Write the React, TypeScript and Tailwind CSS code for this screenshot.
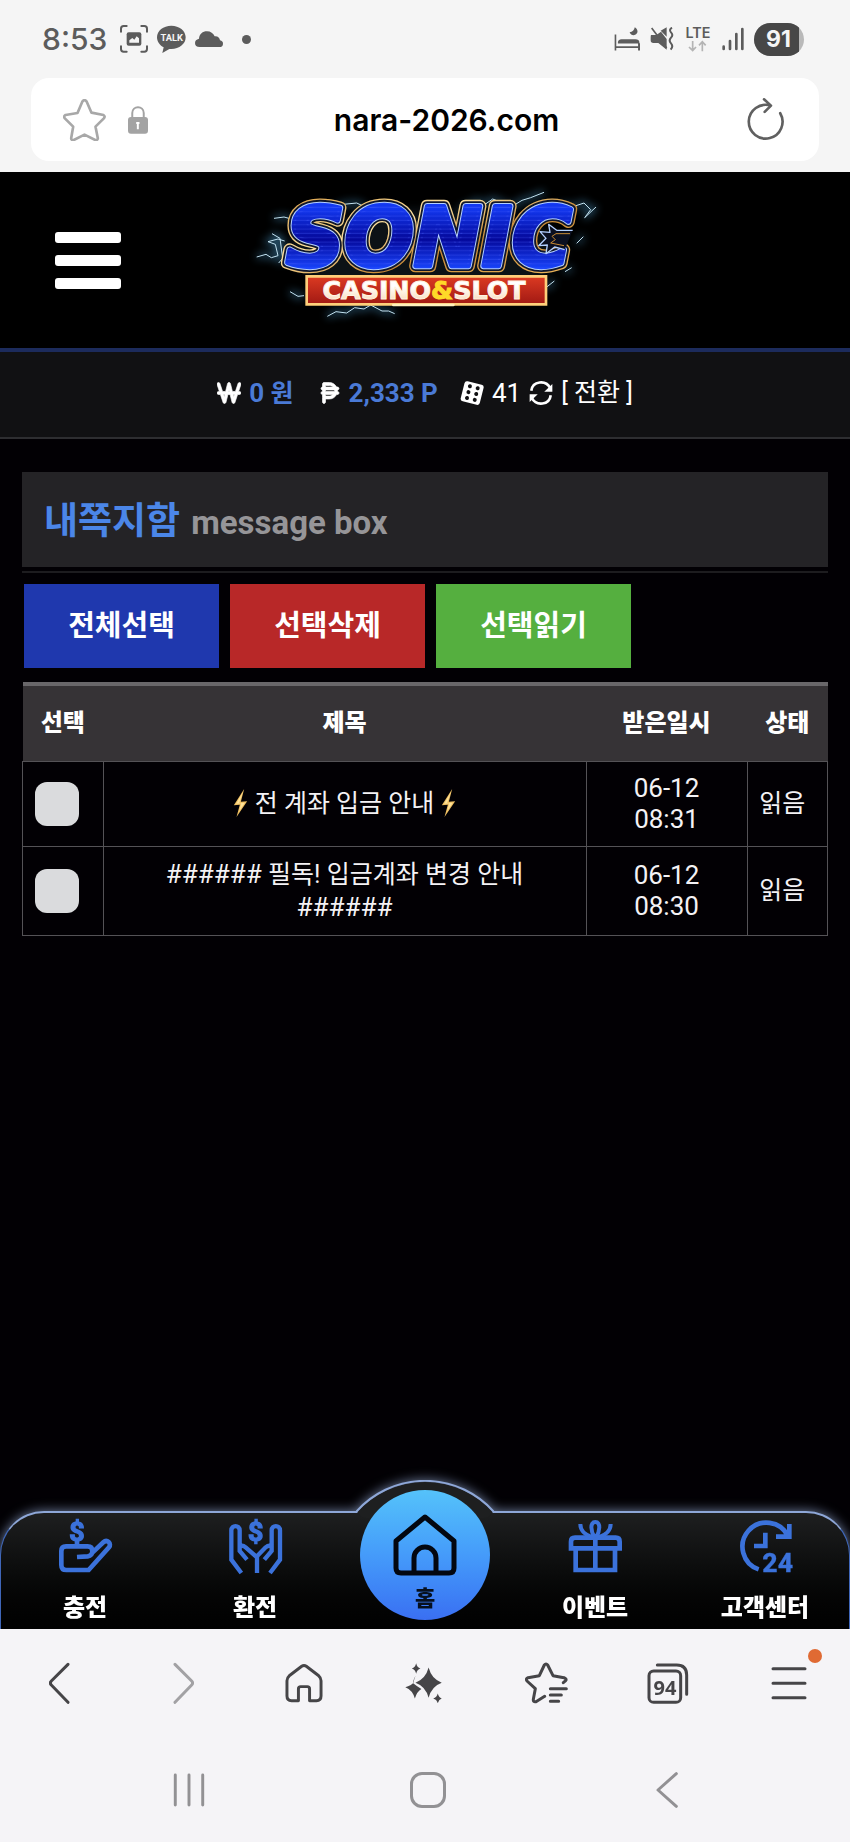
import type { ReactNode } from "react";
import { FaPesoSign, FaWonSign } from "react-icons/fa6";

/* ---------- phone status bar ---------- */

function StatusBar() {
  return (
    <div className="flex h-[78px] items-center justify-between pr-[46px] pl-[42px] text-[#5c5c5c]">
      <div className="flex items-center gap-[9px]">
        <span className="mr-1 font-[Inter,sans-serif] text-[30px] leading-8 font-medium">8:53</span>
        <svg className="h-7 w-7" viewBox="360 77 84 84" fill="none" stroke="currentColor" strokeWidth="6" strokeLinecap="round" aria-hidden="true">
          <path d="M363 97V88q0-8 8-8h9M424 80h9q8 0 8 8v9M441 141v8q0 8-8 8h-9M380 157h-9q-8 0-8-8v-8" />
          <rect x="380" y="99" width="44" height="40" rx="6" fill="currentColor" stroke="none" />
          <path d="M388 130v-7l9-7 6 5 7-10 7 6v13z" fill="#f5f5f5" stroke="none" />
        </svg>
        <svg className="h-7 w-[29px]" viewBox="470 76 87 84" fill="currentColor" aria-hidden="true">
          <path d="M513 78c24 0 43 15 43 35s-19 35-43 35h-6l-21 12 4-17c-12-6-20-17-20-30 0-20 19-35 43-35z" />
          <text x="514" y="125" textAnchor="middle" fill="#f5f5f5" fontFamily="Roboto, sans-serif" fontWeight="700" fontSize="28">TALK</text>
        </svg>
        <svg className="h-4 w-7" viewBox="582 92 84 48" fill="currentColor" aria-hidden="true">
          <path d="M596 140q-14 0-14-12 0-10 12-13c1-14 11-22 24-22 11 0 19 6 23 15 10-1 15 5 16 12q9 2 9 10 0 10-11 10z" />
        </svg>
        <span className="ml-2.5 h-[9px] w-[9px] rounded-full bg-[#5c5c5c]" />
      </div>
      <div className="flex items-center gap-[10px]">
        <svg className="h-[26px] w-[26px]" viewBox="562 80 80 76" fill="currentColor" aria-hidden="true">
          <path d="M564 104h5v36h67v-9h6v22h-6v-7h-67v7h-5zM574 132v-5q2-8 11-8h43q11 0 12 8v5zM626 82c-2 9-7 14-16 15 3 8 11 11 17 8 8-3 12-14-1-23z" />
        </svg>
        <svg className="h-6 w-6" viewBox="676 83 72 72" fill="currentColor" aria-hidden="true">
          <path d="M679 107h16l14-10 17 22v32l-25-20h-15q-8 0-8-8v-8q0-6 1-8zM708 94l18-10v28z" />
          <path d="M681 86l45 60" fill="none" stroke="currentColor" strokeWidth="5" />
          <path d="M742 85q-10 6-3 14 8 8 0 16-8 9 0 17 8 9-1 19" fill="none" stroke="currentColor" strokeWidth="6" />
        </svg>
        <svg className="h-[34px] w-7 overflow-visible" viewBox="785 67 84 102" fill="none" aria-hidden="true">
          <text x="827" y="114" textAnchor="middle" fill="currentColor" fontFamily="Inter, sans-serif" fontWeight="600" fontSize="43">LTE</text>
          <path d="M811 124v28m-11-10 11 11 10-11M840 155v-29m-10 11 10-11 10 11" stroke="#b4b4b4" strokeWidth="5" />
        </svg>
        <svg className="h-6 w-[22px]" viewBox="893 83 66 70" stroke="currentColor" strokeWidth="8" strokeLinecap="round" aria-hidden="true">
          <path d="M898 141v7M917 124v24M936 103v45M954 88v60" />
        </svg>
        <span className="flex h-[33px] w-[50px] items-center overflow-hidden rounded-full bg-[#b9b9b9]">
          <span className="flex h-full w-[45px] items-center justify-center bg-[#474747] pl-1 font-[Inter,sans-serif] text-[23px] font-bold text-[#f5f5f5]">91</span>
        </span>
      </div>
    </div>
  );
}

function AddressBar() {
  return (
    <div className="mx-[31px] mb-[11px] flex h-[83px] items-center rounded-[18px] bg-white px-8">
      <div className="flex items-center gap-[22px]">
        <button type="button" aria-label="Bookmark">
          <svg className="block h-[42px] w-[43px]" viewBox="189 295 128 126" fill="none" stroke="#a8a8a8" strokeWidth="8" strokeLinejoin="round" aria-hidden="true">
            <path d="M247 302q6-7 12 0l15 34 36 7q6 4 1 10l-25 25 7 35q-1 7-8 5l-32-16-32 16q-8 2-8-5l6-35-25-25q-5-6 2-10l36-6z" />
          </svg>
        </button>
        <svg className="h-7 w-5" viewBox="383 317 61 84" fill="none" aria-hidden="true">
          <path d="M396 356v-18c0-24 35-24 35 0v18" stroke="#a3a3a3" strokeWidth="6" />
          <rect x="383" y="350" width="61" height="51" rx="9" fill="#a3a3a3" />
          <path d="M413 368v19M408 368h10" stroke="#fff" strokeWidth="6" />
        </svg>
      </div>
      <span className="flex-1 text-center font-[Inter,sans-serif] text-[30px] leading-9 font-semibold text-black">nara-2026.com</span>
      <button type="button" aria-label="Reload">
        <svg className="block h-[43px] w-[42px]" viewBox="962 288 120 130" fill="none" stroke="#606060" strokeWidth="8" strokeLinecap="round" strokeLinejoin="round" aria-hidden="true">
          <path d="M1065 334A51 51 0 1 1 1036 311M1016 292l21 19-19 19" />
        </svg>
      </button>
    </div>
  );
}

/* ---------- site header ---------- */

function Logo() {
  return (
    <svg className="h-[160px] w-[370px] max-w-full" viewBox="0 15 1110 480" role="img" aria-label="SONIC CASINO&SLOT">
      <defs>
        <linearGradient id="gold" x1="0" x2="1" y1="0" y2="1">
          <stop offset="0" stopColor="#d79a3e" />
          <stop offset=".35" stopColor="#ffe3a0" />
          <stop offset=".6" stopColor="#c98a34" />
          <stop offset="1" stopColor="#f3bf64" />
        </linearGradient>
        <linearGradient id="blue" x1="0" x2="0" y1="100" y2="285" gradientUnits="userSpaceOnUse">
          <stop offset="0" stopColor="#1238f0" />
          <stop offset=".5" stopColor="#04089a" />
          <stop offset="1" stopColor="#1846ff" />
        </linearGradient>
        <linearGradient id="red" x1="0" x2="0" y1="0" y2="1">
          <stop offset="0" stopColor="#dc3a22" />
          <stop offset="1" stopColor="#a11913" />
        </linearGradient>
        <linearGradient id="cream" x1="0" x2="0" y1="0" y2="1">
          <stop offset=".4" stopColor="#fff" />
          <stop offset="1" stopColor="#f8d3a8" />
        </linearGradient>
        <pattern id="lines" width="12" height="13" patternUnits="userSpaceOnUse">
          <path d="M0 6h12" stroke="#4a62ff" strokeOpacity=".5" strokeWidth="2" />
        </pattern>
        <filter id="soft" x="-30%" y="-50%" width="160%" height="200%">
          <feGaussianBlur stdDeviation="12" />
        </filter>
        <g id="bolts" fill="none">
          <path d="M50 246l28-8 16 10 20-6-8-34-22-8 30-8 20 6M102 130l30-4 22 6M96 176l24 14 8 60-12 14M150 350l24 14 18-2M262 424l26-14 32 4 24-16 28 4 20-12 34 18 20 0 18 8M284 100l26-12 40-4 26 12M660 104l50-26 28 8 20-14 30 12 22 14 36-22 26-8 40-16M958 92l44 2 30-10 20 20-18 24 34-32M1010 205l20-20M975 290l20-12M915 340l28-22" />
        </g>
      </defs>
      <ellipse cx="560" cy="230" rx="420" ry="130" fill="#2c3c48" opacity=".3" filter="url(#soft)" />
      <use href="#bolts" stroke="#4d9fd0" strokeWidth="12" opacity=".6" filter="url(#soft)" />
      <use href="#bolts" stroke="#c3e3f2" strokeWidth="3" strokeLinejoin="round" />
      <g strokeLinejoin="round">
        <g fill="none" stroke="url(#gold)" strokeWidth="38">
          <text id="word" x="138" y="274" fontFamily="'DejaVu Sans', sans-serif" fontWeight="700" fontStyle="italic" fontSize="244">
            SONIC
          </text>
        </g>
        <use href="#word" fill="none" stroke="#10172c" strokeWidth="30" />
        <use href="#word" fill="none" stroke="#b4d0ff" strokeWidth="19" />
        <use href="#word" fill="url(#blue)" stroke="url(#blue)" strokeWidth="13" />
        <use href="#word" fill="url(#lines)" stroke="url(#lines)" strokeWidth="11" />
        <path d="M998 166 950 166 926 148 930 172 900 170 918 190 896 212 922 210 918 236 944 216 974 224" fill="#0b0f20" stroke="#b4d0ff" strokeWidth="4" />
        <path d="M990 176 948 176 936 184 946 194 932 204 972 212" fill="none" stroke="#c98a34" strokeWidth="3" />
      </g>
      <path d="M200 304H918V388H200Z" fill="url(#red)" stroke="#ffcf7a" strokeWidth="8" />
      <path d="M460 390H640" stroke="#fff0bd" strokeWidth="8" strokeLinecap="round" />
      <text x="552" y="371" textAnchor="middle" fontFamily="'DejaVu Sans', sans-serif" fontWeight="700" fontSize="76" fill="url(#cream)" stroke="#fff4e2" strokeWidth="3">
        CASINO<tspan fill="#ffd928" stroke="#ffd928">&amp;</tspan>SLOT
      </text>
    </svg>
  );
}

function SiteHeader() {
  return (
    <header className="grid h-[180px] grid-cols-[1fr_auto_1fr] items-center border-b-4 border-[#1c2b5c] bg-black px-[55px]">
      <button type="button" aria-label="메뉴" className="flex w-[66px] flex-col gap-3">
        <span className="h-[11px] rounded-[3px] bg-white" />
        <span className="h-[11px] rounded-[3px] bg-white" />
        <span className="h-[11px] rounded-[3px] bg-white" />
      </button>
      <Logo />
    </header>
  );
}

function DiceIcon() {
  return (
    <svg className="h-6 w-6" viewBox="778 120 72 72" aria-hidden="true">
      <g transform="rotate(14 814 156)">
        <rect x="785" y="125" width="59" height="62" rx="8" fill="#fff" />
        <g fill="#111113">
          <circle cx="803" cy="138" r="6" />
          <circle cx="827" cy="138" r="6" />
          <circle cx="803" cy="156" r="6" />
          <circle cx="827" cy="156" r="6" />
          <circle cx="803" cy="174" r="6" />
          <circle cx="827" cy="174" r="6" />
        </g>
      </g>
    </svg>
  );
}

function SyncIcon() {
  return (
    <svg className="h-6 w-6" viewBox="986 124 74 72" fill="none" stroke="#fff" strokeWidth="8" aria-hidden="true">
      <path d="M993 153c4-31 45-34 58-9M1053 167c-4 31-45 34-58 9" />
      <path d="M1058 132v24h-25zM988 188v-24h25z" fill="#fff" stroke="none" />
    </svg>
  );
}

function BalanceBar() {
  return (
    <div className="flex h-[87px] items-center justify-center border-b-2 border-[#2e2e31] bg-[#111113] pb-[3px] text-[26px] leading-[30px] text-white">
      <FaWonSign className="h-6 w-6" stroke="currentColor" strokeWidth="14" aria-hidden="true" />
      <span className="ml-2 font-bold text-[#4a7ad6]">
        0 <span className="text-[25px]">원</span>
      </span>
      <FaPesoSign className="ml-6 h-6 w-6" stroke="currentColor" strokeWidth="14" aria-hidden="true" />
      <span className="ml-[7px] font-bold text-[#4a7ad6]">2,333 P</span>
      <span className="ml-[22px] flex items-center gap-2">
        <DiceIcon />
        41
      </span>
      <button type="button" className="ml-2 flex items-center gap-2">
        <SyncIcon />
        <span className="text-[25px]">[ 전환 ]</span>
      </button>
    </div>
  );
}

/* ---------- message box ---------- */

const messages = [
  { id: 1, label: "전 계좌 입금 안내 선택", subject: <><Bolt /> 전 계좌 입금 안내 <Bolt /></>, day: "06-12", time: "08:31" },
  { id: 2, label: "필독! 입금계좌 변경 안내 선택", subject: <><Hashes /> 필독! 입금계좌 변경 안내 <Hashes /></>, day: "06-12", time: "08:30" },
];

function Hashes() {
  return <span className="text-[26px]">######</span>;
}

function Bolt() {
  return (
    <svg className="inline-block h-7 w-[15px] align-[-5px]" viewBox="698 390 40 84" aria-hidden="true">
      <path d="M729 390l-31 49 18-2-10 37 32-47-19 1z" fill="#f0bf62" />
      <path d="M725 400l-20 34 15-1-6 24 17-26-17 1z" fill="#ffe39a" />
    </svg>
  );
}

function MessageBox() {
  const cell = "border border-[#545256] py-[11px]";
  return (
    <main className="flex-1 bg-[#020004] px-[22px] pt-[33px] pb-10">
      <h1 className="flex h-[95px] items-center gap-[11px] bg-[#242326] px-[22px] pt-1 text-[37px] font-bold text-[#4b86e8]">
        내쪽지함 <small className="pt-0.5 text-[33px] text-[#969598]">message box</small>
      </h1>
      <div className="mt-1 border-t-2 border-[#1d1c1f]" />
      <div className="mt-[11px] flex gap-[11px] px-0.5 text-[29px] font-bold text-white">
        <button type="button" className="h-[84px] w-[195px] bg-[#1f38ae] pt-0.5">전체선택</button>
        <button type="button" className="h-[84px] w-[195px] bg-[#b82828] pt-0.5">선택삭제</button>
        <button type="button" className="h-[84px] w-[195px] bg-[#55af3f] pt-0.5">선택읽기</button>
      </div>
      <table className="mt-[14px] w-full table-fixed border-collapse text-center text-[25px] text-[#f4f2f5]">
        <colgroup>
          <col className="w-[10%]" />
          <col className="w-[60%]" />
          <col className="w-[20%]" />
          <col className="w-[10%]" />
        </colgroup>
        <thead>
          <tr className="h-[77px] border-t-4 border-[#69676a] bg-[#363336] text-[24px] text-white">
            <th scope="col" className="font-black">선택</th>
            <th scope="col" className="font-black">제목</th>
            <th scope="col" className="font-black">받은일시</th>
            <th scope="col" className="font-black">상태</th>
          </tr>
        </thead>
        <tbody>
          {messages.map((m) => (
            <tr key={m.id}>
              <td className={cell}>
                <input type="checkbox" aria-label={m.label} className="ml-3 block h-11 w-11 appearance-none rounded-[12px] bg-[#dadbdd] checked:bg-[#4b86e8]" />
              </td>
              <td className={`${cell} px-5 leading-8`}>
                <a href="#message">{m.subject}</a>
              </td>
              <td className={`${cell} text-[26px] leading-[31px]`}>
                {m.day}
                <br />
                {m.time}
              </td>
              <td className={`${cell} pr-2.5`}>읽음</td>
            </tr>
          ))}
        </tbody>
      </table>
    </main>
  );
}

/* ---------- site tab bar ---------- */

function TabIcon({ viewBox, children }: { viewBox: string; children: ReactNode }) {
  return (
    <svg className="h-[54px] w-[55px] overflow-visible" viewBox={viewBox} fill="none" stroke="#3b72db" strokeWidth="14" aria-hidden="true">
      {children}
    </svg>
  );
}

function Dollar({ x }: { x: number }) {
  return (
    <text x={x} y="240" textAnchor="middle" fill="#3b72db" stroke="#3b72db" strokeWidth="4" fontFamily="Roboto, sans-serif" fontWeight="700" fontSize="80">
      $
    </text>
  );
}

function Tab({ label, children }: { label: string; children: ReactNode }) {
  return (
    <a href="#tab" className="flex flex-col items-center gap-5 pt-2 text-[24px] leading-[30px] font-black text-white">
      {children}
      {label}
    </a>
  );
}

function TabBar() {
  return (
    <nav className="relative h-[118px] bg-[#020004]">
      <div className="absolute inset-0 drop-shadow-[0_0_6px_#6f7f9f]" aria-hidden="true">
        <div className="h-full rounded-t-[44px] border-x border-t-2 border-x-[#3f66b8] border-t-[#8ea7d8] bg-linear-to-b from-[#1e1f20] via-[#0b0c0c] to-[#010101]" />
        <svg className="absolute -top-[31px] left-1/2 h-[38px] w-[138px] -translate-x-1/2" viewBox="0 0 138 38">
          <path d="M1 32Q5 38 10 38H128Q133 38 137 32A92 92 0 0 0 1 32Z" fill="#1e1f20" />
          <path d="M0 32A92 92 0 0 1 138 32" fill="none" stroke="#8ea7d8" strokeWidth="2" />
        </svg>
      </div>
      <div className="relative grid h-full grid-cols-5">
        <Tab label="충전">
          <TabIcon viewBox="172 175 165 162">
            <Dollar x={229} />
            <path d="M229 240v16" />
            <path d="M229 289l32-2q14-2 14-16c0-9-5-14-14-14h-65q-14 0-14 14v42q0 15 15 15h67l61-68c9-12-6-25-17-15l-32 30" />
          </TabIcon>
        </Tab>
        <Tab label="환전">
          <TabIcon viewBox="682 175 165 162">
            <Dollar x={765} />
            <g strokeWidth="13">
              <path d="M722 337l-30-40v-88c0-17 25-17 25 0v62l22 26M717 258q8-6 18 2l34 30v47" />
              <path d="M808 337l30-40v-88c0-17-25-17-25 0v62l-22 26M813 258q-8-6-18 2l-29 30" />
            </g>
          </TabIcon>
        </Tab>
        <a href="#home" className="-mt-[21px] flex h-[130px] w-[130px] flex-col items-center justify-self-center rounded-full bg-linear-to-b from-[#55c2fa] via-[#459bfa] to-[#3a6ff2] pt-[23px] text-[22px] leading-[30px] font-black text-[#06101f]">
          <svg className="h-[63px] w-16 shrink-0" viewBox="0 0 64 63" fill="none" stroke="#030710" strokeWidth="5" strokeLinejoin="round" aria-hidden="true">
            <path d="M3 28 32 4l29 24v27q0 5-5 5H8q-5 0-5-5zM21 60V45a11 11 0 0 1 22 0v15" />
          </svg>
          <span className="mt-2">홈</span>
        </a>
        <Tab label="이벤트">
          <TabIcon viewBox="428 175 165 162">
            <path d="M451 268v60h118v-60M510 230v98M437 269v-26q0-12 12-12h122q12 0 12 12v26M430 263h160" />
            <path d="M508 230c-12-18-15-46 2-46s14 28 2 46M465 190c0 22 14 32 36 40M556 190c0 22-14 32-36 40" strokeWidth="12" />
          </TabIcon>
        </Tab>
        <Tab label="고객센터">
          <TabIcon viewBox="939 175 165 162">
            <path d="M1001 326A72 72 0 1 1 1089 226M1093 190v38h-40M1021 216v40h-34" />
            <text x="1058" y="335" textAnchor="middle" fill="#3b72db" stroke="#3b72db" strokeWidth="1" fontFamily="Roboto, sans-serif" fontWeight="800" fontSize="80">
              24
            </text>
          </TabIcon>
        </Tab>
      </div>
    </nav>
  );
}

/* ---------- browser and phone controls ---------- */

function BarButton({ label, children }: { label: string; children: ReactNode }) {
  return (
    <button type="button" aria-label={label} className="relative flex h-12 w-14 items-center justify-center justify-self-center text-[#464548]">
      {children}
    </button>
  );
}

function BrowserControls() {
  const line = { fill: "none", stroke: "currentColor", strokeWidth: 9, strokeLinecap: "round", strokeLinejoin: "round", "aria-hidden": true } as const;
  return (
    <div className="relative bg-[#f5f4f7]">
      <div className="grid h-[108px] grid-cols-7 items-center">
        <BarButton label="Back">
          <svg className="h-[42px] w-6" viewBox="146 125 72 126" {...line}>
            <path d="M203 132l-50 50q-6 6 0 12l50 52" />
          </svg>
        </BarButton>
        <BarButton label="Forward">
          <svg className="h-[42px] w-6 text-[#a2a1a4]" viewBox="510 125 72 126" {...line}>
            <path d="M525 132l50 50q6 6 0 12l-50 52" />
          </svg>
        </BarButton>
        <BarButton label="Home">
          <svg className="h-10 w-[38px]" viewBox="851 128 116 120" {...line}>
            <path d="M902 137q7-5 14 0l38 29q7 6 7 15v47q0 14-14 14h-21v-36q0-7-7-7h-20q-7 0-7 7v36h-21q-14 0-14-14v-47q0-9 7-15z" />
          </svg>
        </BarButton>
        <BarButton label="Assistant">
          <svg className="h-10 w-10" viewBox="1216 124 120 122" fill="currentColor" aria-hidden="true">
            <path d="M1249 125q3 13 13 16-10 3-13 16-3-13-13-16 10-3 13-16zM1315 217q3 12 12 15-9 3-12 15-3-12-14-15 11-3 14-15zM1287 138q9 35 40 46-31 11-40 46-9-35-40-46 31-11 40-46z" />
            <path d="M1247 164q-5 12-6 20-7 8-25 14 22 9 29 34 7-22 20-29-12-6-25-17-1-8 7-22z" />
          </svg>
        </BarButton>
        <BarButton label="Bookmarks">
          <svg className="h-[42px] w-[43px]" viewBox="297 127 129 124" {...line}>
            <path d="M356 229l-26 16q-9 2-8-7l6-32-25-23q-5-7 3-10l34-6 15-32q5-6 10 0l16 32 33 6q9 4 5 9l-7 6M373 206h48M373 225h33M373 244h25" />
          </svg>
        </BarButton>
        <BarButton label="Tabs">
          <svg className="h-[41px] w-[42px]" viewBox="663 124 126 123" {...line}>
            <rect x="669" y="148" width="95" height="94" rx="14" />
            <path d="M694 130h58q30 0 30 30v58" />
            <text x="717" y="219" textAnchor="middle" fill="currentColor" stroke="none" fontFamily="'Open Sans', sans-serif" fontWeight="700" fontSize="60">94</text>
          </svg>
        </BarButton>
        <BarButton label="Menu">
          <svg className="h-9 w-9" viewBox="1037 133 108 106" {...line}>
            <path d="M1043 143h96M1043 187h96M1043 230h96" />
          </svg>
          <span className="absolute -top-[10px] -right-[5px] h-[14px] w-[14px] rounded-full bg-[#e06a33]" />
        </BarButton>
      </div>
      <div className="grid h-[105px] grid-cols-3 items-center pr-16 pl-[70px]">
        <BarButton label="Recent apps">
          <svg className="h-[34px] w-8 text-[#929194]" viewBox="518 458 98 104" {...line}>
            <path d="M525 464v92M567 464v92M609 464v92" />
          </svg>
        </BarButton>
        <BarButton label="Phone home">
          <span className="h-9 w-9 rounded-[12px] border-[3px] border-[#929194]" />
        </BarButton>
        <BarButton label="Phone back">
          <svg className="h-9 w-[22px] text-[#929194]" viewBox="686 456 66 108" {...line}>
            <path d="M747 461l-55 49 55 49" />
          </svg>
        </BarButton>
      </div>
    </div>
  );
}

export default function App() {
  return (
    <div className="flex min-h-screen flex-col bg-[#f5f5f5] font-[Roboto,'Noto_Sans_CJK_KR',sans-serif]">
      <StatusBar />
      <AddressBar />
      <SiteHeader />
      <BalanceBar />
      <MessageBox />
      <TabBar />
      <BrowserControls />
    </div>
  );
}
